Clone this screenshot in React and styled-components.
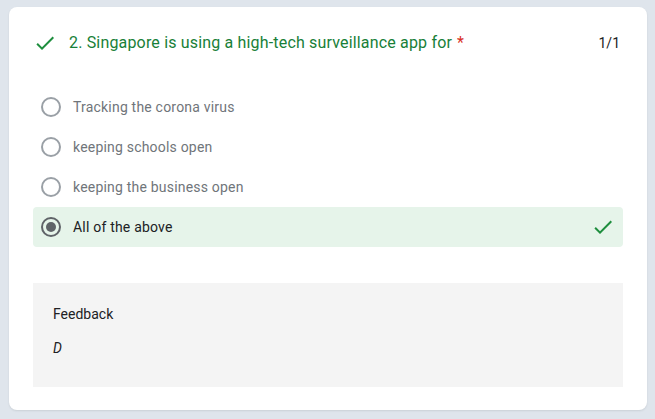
import React from 'react';
import styled, { createGlobalStyle } from 'styled-components';

const Global = createGlobalStyle`
  body {
    margin: 0;
    background: #dfe5ec;
    font-family: Roboto, 'Noto Sans', Arial, sans-serif;
  }
`;

const Page = styled.div`
  padding: 7px 8px 7px 9px;
`;

const Card = styled.div`
  width: 638px;
  box-sizing: border-box;
  background: #fff;
  border-radius: 8px;
  padding: 24px 24px 23px;
  box-shadow: 0 1px 2px rgba(60, 64, 67, 0.12);
`;

const Header = styled.div`
  display: flex;
  align-items: center;
  height: 24px;
  padding-right: 3px;
`;

const Title = styled.div`
  flex: 1;
  margin-left: 12px;
  font-size: 16px;
  line-height: 24px;
  letter-spacing: 0.17px;
  color: #188038;
`;

const Required = styled.span`
  color: #d93025;
  margin-left: 5px;
`;

const Score = styled.div`
  font-size: 14px;
  color: #202124;
`;

const Options = styled.div`
  margin-top: 32px;
  display: flex;
  flex-direction: column;
`;

const Option = styled.div`
  display: flex;
  align-items: center;
  height: 40px;
  padding: 0 8px;
  border-radius: 4px;
  background: ${p => (p.$correct ? '#e6f4ea' : 'transparent')};
`;

const Radio = styled.div`
  width: 20px;
  height: 20px;
  box-sizing: border-box;
  border-radius: 50%;
  border: 2px solid ${p => (p.$checked ? '#5f6368' : '#9aa0a6')};
  display: flex;
  align-items: center;
  justify-content: center;
  flex-shrink: 0;

  &::after {
    content: '';
    display: ${p => (p.$checked ? 'block' : 'none')};
    width: 10px;
    height: 10px;
    border-radius: 50%;
    background: #5f6368;
  }
`;

const Label = styled.span`
  flex: 1;
  margin-left: 12px;
  font-size: 14px;
  color: ${p => (p.$checked ? '#202124' : '#70757a')};
  letter-spacing: 0.2px;
`;

const Feedback = styled.div`
  margin-top: 36px;
  height: 104px;
  box-sizing: border-box;
  background: #f4f4f4;
  padding: 21px 20px;
`;

const FeedbackTitle = styled.div`
  font-size: 14px;
  line-height: 20px;
  color: #202124;
`;

const FeedbackText = styled.div`
  margin-top: 14px;
  font-size: 14px;
  line-height: 20px;
  font-style: italic;
  color: #202124;
`;

const Check = ({ size = 24 }) => (
  <svg width={size} height={size} viewBox="0 0 24 24" fill="#1e8e3e">
    <path d="M9 16.17L4.83 12l-1.42 1.41L9 19 21 7l-1.41-1.41z" />
  </svg>
);

const options = [
  'Tracking the corona virus',
  'keeping schools open',
  'keeping the business open',
  'All of the above',
];

export default function App() {
  const answer = 3;
  return (
    <Page>
      <Global />
      <Card>
        <Header>
          <Check />
          <Title>
            2. Singapore is using a high-tech surveillance app for<Required>*</Required>
          </Title>
          <Score>1/1</Score>
        </Header>
        <Options>
          {options.map((o, i) => (
            <Option key={o} $correct={i === answer}>
              <Radio $checked={i === answer} />
              <Label $checked={i === answer}>{o}</Label>
              {i === answer && <Check />}
            </Option>
          ))}
        </Options>
        <Feedback>
          <FeedbackTitle>Feedback</FeedbackTitle>
          <FeedbackText>D</FeedbackText>
        </Feedback>
      </Card>
    </Page>
  );
}
